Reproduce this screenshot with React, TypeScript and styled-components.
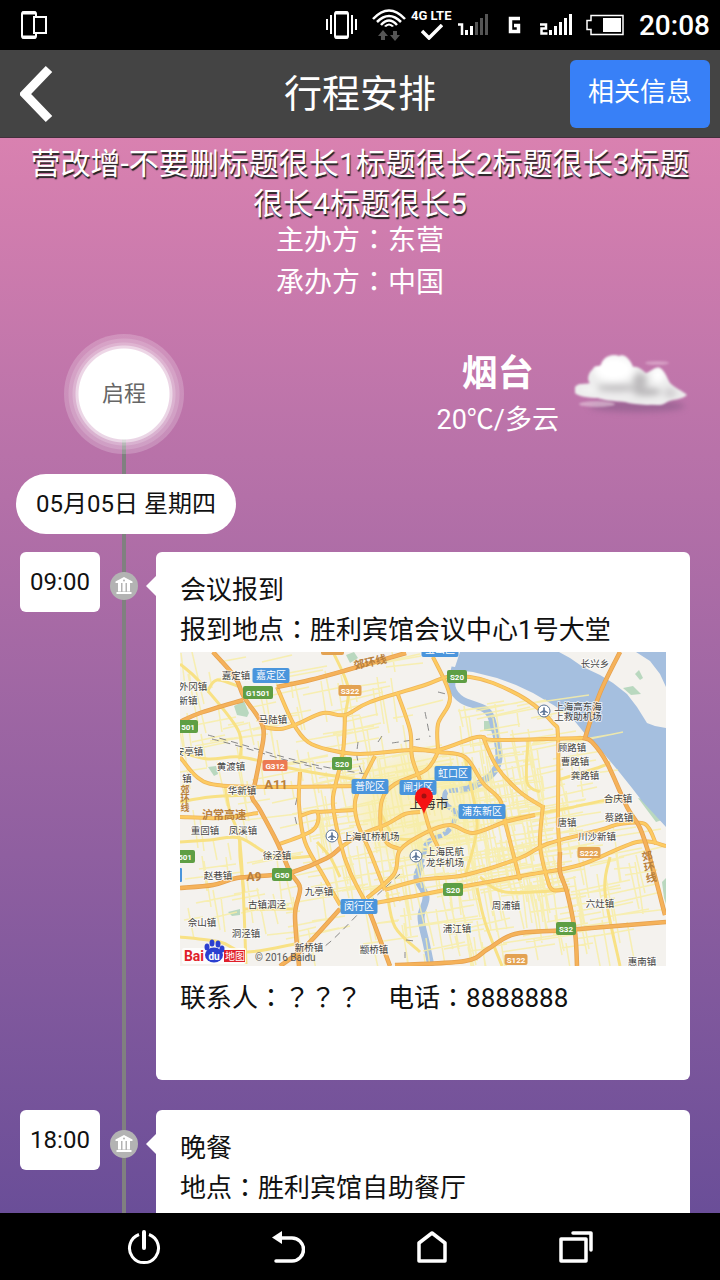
import React from 'react';
import styled, { createGlobalStyle } from 'styled-components';

const GlobalStyle = createGlobalStyle`
  *, *::before, *::after { box-sizing: border-box; }
  body {
    margin: 0;
    background: #000;
    font-family: Roboto, "Noto Sans CJK SC", sans-serif;
    color: #111;
  }
  button { font: inherit; border: 0; cursor: pointer; }
  h1, h2, h3, p { margin: 0; font-weight: 400; }
  svg { display: block; }
`;

const Shell = styled.div`
  height: 100vh;
  display: flex;
  flex-direction: column;
`;

/* ---------- status bar ---------- */

const StatusBar = styled.div`
  flex: none;
  height: 50px;
  padding: 0 10px 0 20px;
  display: flex;
  align-items: center;
  justify-content: space-between;
  background: #000;
  color: #fff;
`;

const StatusIcons = styled.div`
  display: flex;
  align-items: center;
  gap: 5px;
`;

const Clock = styled.time`
  padding-top: 2px;
  font-size: 28px;
  line-height: 48px;
  font-weight: 500;
`;

const NetworkLabel = styled.div`
  width: 42px;
  height: 34px;
  font-size: 13px;
  line-height: 16px;
  font-weight: 700;
  white-space: nowrap;
`;

const CheckMark = styled.svg`
  margin: 0 auto;
`;

/* ---------- header ---------- */

const Header = styled.header`
  flex: none;
  height: 88px;
  padding: 0 10px;
  display: grid;
  grid-template-columns: 1fr auto 1fr;
  align-items: center;
  background: #444;
  border-bottom: 1px solid #43303c;
  color: #fff;
`;

const BackButton = styled.button`
  justify-self: start;
  padding: 8px 10px;
  background: none;
`;

const HeaderTitle = styled.h1`
  font-size: 38px;
  line-height: 50px;
`;

const InfoButton = styled.button`
  justify-self: end;
  width: 140px;
  height: 68px;
  padding: 0 0 4px;
  border-radius: 6px;
  background: #3880f7;
  color: #fff;
  font-size: 26px;
  line-height: 40px;
`;

/* ---------- page ---------- */

const Page = styled.main`
  flex: 1;
  min-height: 0;
  overflow-y: auto;
  scrollbar-width: none;
  background: linear-gradient(#d981b0, #6a4e98);
`;

const Intro = styled.section`
  padding: 6px 24px 0;
  text-align: center;
  color: #fff;
`;

const MeetingTitle = styled.h2`
  font-size: 30px;
  line-height: 40px;
  text-shadow: 1px 2px 1px #222;
`;

const Organizers = styled.div`
  margin-top: -4px;
  font-size: 28px;
  line-height: 42px;
`;

const FullWidth = styled.span`
  font-family: "Noto Sans CJK TC", sans-serif;
  line-height: 1;
`;

const Journey = styled.section`
  position: relative;
  padding: 30px 30px 30px 20px;
`;

const Rail = styled.div`
  position: absolute;
  left: 122px;
  top: 90px;
  bottom: 0;
  width: 4px;
  background: #808080;
`;

const StartRow = styled.div`
  position: relative;
  display: flex;
  justify-content: space-between;
  height: 120px;
  padding-left: 44px;
`;

const StartBadge = styled.div`
  position: relative;
  width: 120px;
  height: 120px;
  border-radius: 50%;
  display: flex;
  align-items: center;
  justify-content: center;
  background: radial-gradient(
    circle,
    #fff 45px,
    rgba(255, 255, 255, 0.7) 46px,
    rgba(255, 255, 255, 0.7) 48px,
    rgba(255, 255, 255, 0.45) 49px,
    rgba(255, 255, 255, 0.45) 51px,
    rgba(255, 255, 255, 0.32) 52px,
    rgba(255, 255, 255, 0.32) 55px,
    rgba(255, 255, 255, 0.2) 56px,
    rgba(255, 255, 255, 0.2) 60px
  );
  color: #666;
  font-size: 22px;
  line-height: 30px;
`;

const Weather = styled.div`
  display: flex;
  align-items: flex-start;
  gap: 10px;
  color: #fff;
  text-align: center;
`;

const WeatherText = styled.div`
  padding-top: 16px;
`;

const City = styled.h3`
  && { font-weight: 700; }
  font-size: 36px;
  line-height: 48px;
`;

const Condition = styled.p`
  font-size: 27px;
  line-height: 44px;
`;

const CloudIcon = styled.svg`
  margin-top: 14px;
`;

const DayPill = styled.div`
  position: relative;
  width: fit-content;
  margin: 20px 0 18px -4px;
  padding: 0 20px;
  border-radius: 30px;
  background: #fff;
  font-size: 24px;
  line-height: 60px;
`;

const Events = styled.ol`
  margin: 0;
  padding: 0;
  list-style: none;
  display: flex;
  flex-direction: column;
  gap: 30px;
`;

const Event = styled.li`
  position: relative;
  display: flex;
  align-items: flex-start;
`;

const EventTime = styled.time`
  width: 80px;
  border-radius: 6px;
  background: #fff;
  text-align: center;
  font-size: 24px;
  line-height: 60px;
`;

const EventMarker = styled.svg`
  margin: 20px 18px 0 10px;
  flex: none;
`;

const EventCard = styled.article`
  position: relative;
  flex: 1;
  min-width: 0;
  min-height: 528px;
  padding: 18px 24px;
  border-radius: 6px;
  background: #fff;
  font-size: 26px;
  line-height: 40px;
  &::before {
    content: "";
    position: absolute;
    left: -10px;
    top: 24px;
    border: 10px solid transparent;
    border-left-width: 0;
    border-right-color: #fff;
  }
`;

const EventTitle = styled.h3`
  font-size: 26px;
  line-height: 40px;
`;

const Contact = styled.p`
  display: flex;
  gap: 26px;
  padding-top: 12px;
`;

const MapView = styled.svg`
  width: 100%;
  height: auto;
  margin-top: 2px;
`;

/* ---------- navigation bar ---------- */

const NavBar = styled.nav`
  flex: none;
  height: 67px;
  padding: 0 10%;
  display: flex;
  background: #000;
`;

const NavButton = styled.button`
  flex: 1;
  padding: 0;
  display: flex;
  align-items: center;
  justify-content: center;
  background: none;
`;

/* Full-width punctuation sits centred in its cell. */
function Text({ children }: { children: string }) {
  return (
    <>
      {children.split(/([：？]+)/).map((part, i) =>
        i % 2 ? <FullWidth key={i}>{part}</FullWidth> : part,
      )}
    </>
  );
}

/* ---------- map data ---------- */

type Pt = [number, number];

function smooth(points: Pt[]): string {
  let d = `M${points[0][0]} ${points[0][1]}`;
  for (let i = 0; i < points.length - 1; i++) {
    const a = points[i - 1] || points[i];
    const b = points[i];
    const c = points[i + 1];
    const e = points[i + 2] || c;
    d += `C${b[0] + (c[0] - a[0]) / 6} ${b[1] + (c[1] - a[1]) / 6} ${c[0] - (e[0] - b[0]) / 6} ${c[1] - (e[1] - b[1]) / 6} ${c[0]} ${c[1]}`;
  }
  return d;
}

const highways: Pt[][] = [
  [[33, 0], [55, 25], [64, 45], [83, 75], [80, 105], [75, 131], [72, 145], [80, 158], [97, 190], [110, 220], [120, 236], [115, 263], [119, 314]],
  [[0, 70], [20, 61], [63, 48]],
  [[97, 35], [130, 28], [167, 18], [226, 1]],
  [[0, 236], [33, 233], [57, 226], [93, 223], [113, 220], [147, 206], [160, 196]],
  [[440, 0], [420, 41], [405, 86]],
  [[403, 86], [412, 90], [427, 111], [447, 155], [460, 176], [470, 206], [485, 263]],
  [[380, 200], [380, 220], [387, 240], [395, 280], [397, 314]],
  [[215, 313], [285, 309], [308, 297], [335, 282], [387, 278], [486, 270]],
  [[187, 253], [198, 282], [210, 314]],
  [[160, 257], [125, 295], [100, 314]],
];

const ringRoads: Pt[][] = [
  [[83, 75], [100, 77], [117, 72], [143, 61], [165, 63], [190, 50], [245, 33], [267, 25], [290, 25], [313, 31], [347, 48], [373, 71], [378, 85], [378, 158], [378, 173], [380, 205]],
  [[97, 35], [113, 71], [128, 90], [150, 98], [180, 102], [230, 98], [258, 98], [293, 86], [303, 85], [317, 88], [403, 86]],
  [[0, 105], [17, 125], [37, 133], [87, 135], [177, 134]],
  [[165, 63], [163, 100], [155, 135], [153, 153], [160, 190], [170, 220], [187, 253]],
  [[217, 40], [230, 78], [232, 105], [240, 128]],
  [[195, 104], [183, 128], [175, 150], [178, 172], [190, 200], [205, 238]],
  [[120, 120], [119, 153], [125, 190], [143, 223], [160, 253]],
  [[0, 165], [40, 166], [78, 161]],
  [[160, 196], [180, 183], [207, 172], [225, 162], [240, 160]],
  [[205, 238], [240, 228], [285, 223], [340, 206], [367, 192], [420, 178], [440, 172], [465, 172], [476, 192]],
  [[187, 246], [214, 222], [220, 198], [245, 181], [270, 173], [293, 181], [325, 170], [355, 163]],
  [[195, 251], [240, 243], [280, 235], [347, 223], [400, 213], [457, 190], [486, 194]],
  [[363, 153], [360, 193], [367, 226], [373, 238], [387, 237]],
  [[325, 170], [340, 228]],
  [[303, 85], [317, 115], [340, 140], [363, 155]],
  [[253, 5], [270, 45], [258, 72], [258, 98]],
  [[233, 96], [258, 100], [285, 105], [303, 131], [320, 148], [325, 170]],
  [[258, 100], [246, 118], [215, 132], [202, 148], [201, 178], [208, 192], [220, 197]],
  [[244, 158], [250, 178], [258, 195]],
  [[97, 193], [133, 178], [137, 160], [120, 164]],
  [[137, 160], [175, 158]],
];

const streets: Pt[][] = [
  [[0, 12], [20, 30], [58, 78], [60, 107]],
  [[27, 40], [37, 28], [60, 35]],
  [[0, 100], [28, 107], [60, 105], [100, 114], [130, 120], [180, 128]],
  [[45, 133], [50, 160], [59, 185], [63, 235], [66, 312]],
  [[0, 190], [30, 188], [60, 186], [95, 205], [133, 204]],
  [[153, 0], [168, 35], [165, 63]],
  [[0, 150], [30, 145], [70, 143]],
  [[63, 257], [115, 257]],
  [[0, 285], [40, 290], [66, 300], [115, 292]],
  [[297, 236], [305, 270], [322, 314]],
  [[348, 88], [347, 130], [360, 140]],
  [[378, 128], [420, 115], [430, 110]],
  [[300, 225], [325, 240], [390, 238]],
  [[325, 167], [378, 158], [440, 145]],
  [[285, 105], [290, 130], [297, 175], [285, 225]],
  [[200, 160], [215, 185], [235, 187]],
  [[137, 190], [150, 205], [160, 225]],
  [[207, 240], [215, 275], [240, 300]],
  [[430, 205], [425, 240], [440, 314]],
  [[60, 185], [60, 205], [64, 240]],
];

const lanes: string = (() => {
  let seed = 7;
  const rnd = () => {
    seed = (seed * 16807) % 2147483647;
    return seed / 2147483647;
  };
  let d = '';
  const field = (x0: number, y0: number, w: number, h: number, n: number) => {
    for (let i = 0; i < n; i++) {
      const x = x0 + rnd() * w;
      const y = y0 + rnd() * h;
      const len = 14 + rnd() * 46;
      const k = 0.12 + rnd() * 0.12;
      if (rnd() > 0.5) d += `M${x.toFixed(0)} ${y.toFixed(0)}l${len.toFixed(0)} ${(-len * k).toFixed(0)}`;
      else d += `M${x.toFixed(0)} ${y.toFixed(0)}l${(len * k).toFixed(0)} ${len.toFixed(0)}`;
    }
  };
  field(0, 0, 230, 130, 110);
  field(0, 150, 150, 140, 60);
  field(130, 100, 210, 140, 220);
  field(270, 50, 90, 190, 130);
  field(340, 90, 60, 160, 70);
  field(180, 220, 230, 90, 90);
  field(390, 165, 70, 120, 30);
  return d;
})();

const rails: Pt[][] = [
  [[28, 83], [60, 92], [100, 104], [140, 114], [185, 122]],
  [[32, 87], [62, 95], [102, 107], [142, 117]],
  [[117, 146], [115, 155]],
  [[115, 165], [117, 174]],
  [[220, 222], [190, 250], [150, 290], [125, 306]],
  [[178, 90], [177, 105], [182, 121]],
  [[198, 90], [202, 84]],
  [[212, 91], [240, 87]],
  [[245, 60], [250, 85]],
  [[258, 40], [266, 42]],
  [[226, 288], [235, 289]],
  [[225, 300], [225, 306]],
];

const towns: [string, number, number][] = [
  ['嘉定镇', 56, 23], ['外冈镇', 13, 34], ['新镇', 8, 48], ['马陆镇', 93, 67],
  ['安亭镇', 9, 99], ['黄渡镇', 51, 114], ['镇', 7, 126], ['华新镇', 62, 138], ['重固镇', 25, 178],
  ['凤溪镇', 63, 178], ['徐泾镇', 97, 203], ['赵巷镇', 38, 223], ['九亭镇', 139, 239],
  ['古镇泗泾', 87, 252], ['佘山镇', 22, 270], ['洞泾镇', 66, 281], ['新桥镇', 129, 295],
  ['颛桥镇', 194, 297], ['上海虹桥机场', 191, 184], ['上海民航', 265, 199],
  ['龙华机场', 265, 210], ['上海高东海', 398, 54], ['上救助机场', 398, 64],
  ['长兴乡', 415, 11], ['顾路镇', 392, 95], ['曹路镇', 395, 109], ['龚路镇', 405, 123],
  ['合庆镇', 438, 146], ['蔡路镇', 439, 165], ['唐镇', 387, 170], ['川沙新镇', 417, 184],
  ['周浦镇', 326, 253], ['六灶镇', 420, 251], ['浦江镇', 277, 276], ['惠南镇', 462, 309],
];

const districts: [string, number, number, number][] = [
  ['嘉定区', 91, 24, 37], ['宝山区', 260, -2, 37], ['普陀区', 190, 135, 37],
  ['闸北区', 238, 136, 37], ['虹口区', 273, 122, 37], ['浦东新区', 302, 160, 47],
  ['闵行区', 179, 255, 37],
];

const GREEN = '#5e9e44';
const ORANGE = '#e3a252';
const RED = '#ec7a52';

const shields: [string, number, number, number, string][] = [
  ['G1501', 78, 40, 30, GREEN], ['G1501', 3, 74, 30, GREEN], ['S20', 277, 24, 20, GREEN],
  ['S20', 162, 111, 20, GREEN], ['G50', 102, 222, 20, GREEN], ['G1501', 0, 204, 30, GREEN],
  ['S20', 273, 237, 20, GREEN], ['S32', 386, 276, 20, GREEN], ['S322', 170, 39, 23, ORANGE],
  ['S222', 409, 201, 23, ORANGE], ['S122', 336, 308, 23, ORANGE], ['G312', 95, 114, 25, RED],
];

const planes: Pt[] = [[152, 184], [236, 204], [364, 59]];

const plane = 'M0 -5L1 -4V-1L5 1.500V2.500L1 1.500V3.500L2.500 5H-2.500L-1 3.500V1.500L-5 2.500V1.500L-1 -1V-4Z';

function VenueMap() {
  return (
    <MapView viewBox="0 0 486 314" role="img" aria-label="地图">
      <defs>
        <clipPath id="map-clip"><rect width="486" height="314" /></clipPath>
        <filter id="glow" x="-20%" y="-20%" width="140%" height="140%"><feGaussianBlur stdDeviation="8" /></filter>
      </defs>
      <g clipPath="url(#map-clip)" fontFamily='Roboto, "Noto Sans CJK SC", sans-serif' fontSize="10" textAnchor="middle">
        <rect width="486" height="314" fill="#f4f2ee" />
        <ellipse cx="238" cy="155" rx="62" ry="52" fill="#faf0b4" opacity=".7" filter="url(#glow)" />
        <g fill="#b9d8bf">
          <path d="M54 54l10-5 5 12-2 4-10-2z" />
          <path d="M28 115l8-1 2 8-4 2z" />
          <path d="M166 3l8-3 4 6-8 5z" />
          <path d="M288 14l12-4 10 5-10 5z" />
          <path d="M304 69h8v10h-8z" />
          <path d="M48 260l12-3v6l-8 1z" />
          <path d="M443 36l10-2 8 8-10 1z" />
          <path d="M455 22l4-4 4 8-3 2z" />
          <path d="M458 146l10 2 14 20-6 2z" />
          <path d="M482 230l4-4v26l-2-6z" />
        </g>
        <path
          fill="#a5bfdf"
          d="M280 0L274 18L293 20L317 26L336 33L353 41L375 54L393 67L410 88L425 103L440 121L452 136L462 149L475 163L486 175V76L475 74L467 71L457 55L447 42L433 31L420 23L403 15L390 6L379 0Z"
        />
        <path fill="#a5bfdf" d="M456 0L470 9L480 22L486 35V0Z" />
        <g fill="none" stroke="#a5bfdf" strokeWidth="5">
          <path strokeWidth="7" d={smooth([[275, 15], [272, 35], [282, 48], [306, 58], [314, 75], [319, 105], [312, 122], [292, 135], [280, 138]])} />
          <path strokeDasharray="9 2" d={smooth([[278, 138], [266, 140], [266, 152], [276, 162], [267, 180], [248, 190], [243, 205], [237, 221]])} />
          <path strokeWidth="7" d={smooth([[242, 212], [237, 226], [246, 245], [241, 265], [246, 290], [251, 314]])} />
        </g>
        <path d={lanes} fill="none" stroke="#f7eda6" strokeWidth="1.500" opacity=".85" />
        <g fill="none" stroke="#f8e184" strokeWidth="3">
          {streets.map((r, i) => <path key={i} d={smooth(r)} />)}
        </g>
        <g fill="none" stroke="#888" strokeWidth="1" strokeDasharray="7 5">
          {rails.map((r, i) => <path key={i} d={smooth(r)} />)}
        </g>
        <g fill="none" stroke="#eeb45a" strokeWidth="4">
          {ringRoads.map((r, i) => <path key={i} d={smooth(r)} />)}
        </g>
        <g fill="none" stroke="#fdcb62" strokeWidth="2.500">
          {ringRoads.map((r, i) => <path key={i} d={smooth(r)} />)}
        </g>
        <g fill="none" stroke="#e5a04e" strokeWidth="4.500">
          {highways.map((r, i) => <path key={i} d={smooth(r)} />)}
        </g>
        <g fill="none" stroke="#f5b25a" strokeWidth="3">
          {highways.map((r, i) => <path key={i} d={smooth(r)} />)}
        </g>

        <g fill="#b9803c" fontSize="13" fontWeight="700">
          <text transform="translate(191 14) rotate(-12)" fontSize="11">郊环线</text>
          <text x="96" y="137">A11</text>
          <text x="44" y="167" fontSize="11">沪常高速</text>
          <text x="74" y="229" fontSize="12">A9</text>
          <text transform="translate(468 208) rotate(-10)" fontSize="11">
            <tspan x="0" y="0">郊</tspan>
            <tspan x="0" y="11">环</tspan>
            <tspan x="0" y="22">线</tspan>
          </text>
          <text fontSize="9">
            <tspan x="5" y="141">郊</tspan>
            <tspan x="5" y="150">环</tspan>
            <tspan x="5" y="159">线</tspan>
          </text>
        </g>

        <g fill="#444" stroke="#fff" strokeWidth="2" strokeOpacity=".7" paintOrder="stroke" strokeLinejoin="round" fontSize="9.500">
          {towns.map(([name, x, y]) => (
            <text key={name + x} x={x} y={y + 4}>{name}</text>
          ))}
        </g>

        {planes.map(([x, y]) => (
          <g key={x} transform={`translate(${x} ${y})`}>
            <circle r="6" fill="#fff" stroke="#5b7497" />
            <path d={plane} fill="#5b7497" transform="scale(.8)" />
          </g>
        ))}

        {districts.map(([name, x, y, w]) => (
          <g key={name}>
            <rect x={x - w / 2} y={y - 8} width={w} height="15" rx="2" fill="#4a95dc" />
            <text x={x} y={y + 3} fill="#fff">{name}</text>
          </g>
        ))}

        <rect x="141" y="-8" width="23" height="11" rx="2" fill={ORANGE} />
        <rect x="-4" y="216" width="6" height="14" rx="1" fill="#4a95dc" />

        <g fontSize="8" fontWeight="700">
          {shields.map(([name, x, y, w, color]) => (
            <g key={name + x}>
              <rect x={x - w / 2} y={y - 6} width={w} height={color === GREEN ? 13 : 11} rx="2" fill={color} />
              <text x={x} y={color === GREEN ? y + 4 : y + 3} fill="#fff">{name}</text>
            </g>
          ))}
        </g>

        <text x="249" y="156" fill="#333" fontSize="13">上海市</text>
        <path d="M244 162C242 154 235 150 235 144.500A9 9 0 0 1 253 144.500C253 150 246 154 244 162Z" fill="#f51313" />
        <circle cx="244" cy="144" r="2.500" fill="#a01010" />

        <rect x="2" y="296" width="64" height="16" rx="2" fill="#fff" opacity=".8" />
        <text x="14" y="309" fill="#e0202a" fontSize="14" fontWeight="700">Bai</text>
        <g fill="#2b3fd0">
          <ellipse cx="34" cy="303" rx="9" ry="7.500" />
          <ellipse cx="27" cy="295" rx="2.500" ry="3.500" />
          <ellipse cx="32" cy="291" rx="2.500" ry="3.500" />
          <ellipse cx="38" cy="292" rx="2.500" ry="3.500" />
          <ellipse cx="42" cy="297" rx="2.500" ry="3.500" />
        </g>
        <text x="34" y="308" fill="#fff" fontSize="10" fontWeight="700">du</text>
        <rect x="44" y="298" width="21" height="12" fill="#e0202a" />
        <text x="55" y="308" fill="#fff" fontSize="10">地图</text>
        <text x="75" y="309" fill="#555" fontSize="10" textAnchor="start">© 2016 Baidu</text>
      </g>
    </MapView>
  );
}

function Marker() {
  return (
    <EventMarker width="28" height="28" viewBox="0 0 28 28" aria-hidden="true">
      <circle cx="14" cy="14" r="14" fill="#b3b3b3" />
      <path
        fill="#fff"
        d="M14 5L22.500 9.500V11H5.500V9.500ZM8 11H11V19.500H8ZM12.500 11H15.500V19.500H12.500ZM17 11H20V19.500H17ZM6.500 20H21.500V22H6.500Z"
      />
      <circle cx="14" cy="8.500" r="1" fill="#b3b3b3" />
    </EventMarker>
  );
}

function Cloud() {
  return (
    <CloudIcon width="121" height="72" viewBox="0 0 121 72" role="img" aria-label="多云">
      <defs>
        <filter id="soft" x="-20%" y="-40%" width="140%" height="180%"><feGaussianBlur stdDeviation="0.800" /></filter>
        <filter id="softer" x="-40%" y="-80%" width="180%" height="260%"><feGaussianBlur stdDeviation="3" /></filter>
        <clipPath id="cloud-shape">
          <path d="M6 39C10 34 17 37 21 35C17 31 20 24 24 21C25 17 30 19 32 17C34 8 44 5 50 8C56 5 62 13 64 19C69 18 73 22 77 25C82 24 86 18 91 20C96 23 98 30 101 35C106 40 114 43 118 47C113 52 104 51 98 54C92 59 84 56 79 57C70 56 62 56 56 54C44 53 34 52 29 50C20 50 8 48 6 45Z" />
        </clipPath>
      </defs>
      <ellipse cx="68" cy="58" rx="48" ry="6" fill="#7b5580" opacity=".5" filter="url(#softer)" />
      <ellipse cx="28" cy="56" rx="18" ry="3" fill="#f0dbe8" opacity=".5" filter="url(#soft)" />
      <ellipse cx="88" cy="15" rx="12" ry="2" fill="#e9c3dc" opacity=".5" filter="url(#soft)" />
      <g filter="url(#soft)">
        <g clipPath="url(#cloud-shape)">
          <rect width="121" height="72" fill="#ececec" />
          <g filter="url(#softer)">
            <ellipse cx="45" cy="21" rx="20" ry="13" fill="#fff" />
            <ellipse cx="89" cy="27" rx="7" ry="8" fill="#fff" />
            <ellipse cx="48" cy="40" rx="22" ry="4" fill="#c4c2c4" />
            <ellipse cx="71" cy="33" rx="7" ry="8" fill="#bdbbbd" />
            <ellipse cx="78" cy="44" rx="14" ry="4" fill="#b9b7b9" />
            <ellipse cx="101" cy="45" rx="6" ry="5" fill="#d0ced0" />
            <ellipse cx="20" cy="42" rx="10" ry="4" fill="#f4f4f4" />
            <ellipse cx="45" cy="48" rx="18" ry="2" fill="#f2f0f2" />
            <ellipse cx="86" cy="54" rx="14" ry="3" fill="#f0f0f0" />
          </g>
        </g>
      </g>
    </CloudIcon>
  );
}

function Signal({ label, on, width }: { label: string; on: number; width: number }) {
  return (
    <svg width={width} height="22" viewBox={`0 0 ${width} 22`} role="img" aria-label="信号">
      {label === '1' ? (
        <path d="M0 10.500H4V21" fill="none" stroke="#fff" strokeWidth="2.500" />
      ) : (
        <path d="M0 10.500H6V14.500H1.500V19.500H7.500" fill="none" stroke="#fff" strokeWidth="2.500" />
      )}
      {[0, 1, 2, 3, 4].map((i) => (
        <rect key={i} x={(label === '1' ? 7 : 9) + i * 5} y={16 - i * 4} width="3" height={5 + i * 4} fill={i < on ? '#fff' : '#555'} />
      ))}
    </svg>
  );
}

export default function App() {
  return (
    <Shell>
      <GlobalStyle />
      <StatusBar>
        <svg width="28" height="30" viewBox="0 0 28 30" aria-hidden="true">
          <rect x="2" y="2" width="14" height="26" rx="2" fill="none" stroke="#fff" strokeWidth="2" />
          <path d="M2 3H16M2 27H16" stroke="#fff" strokeWidth="3" />
          <rect x="14" y="7" width="12" height="16" fill="#000" stroke="#fff" strokeWidth="2" />
        </svg>
        <StatusIcons>
          <svg width="41" height="30" viewBox="0 0 41 30" aria-hidden="true">
            <rect x="9" y="2" width="13" height="26" rx="2" fill="none" stroke="#fff" strokeWidth="2" />
            <path d="M9 3H22M9 27H22" stroke="#fff" strokeWidth="3" />
            <path d="M1 9V20M5 5V24M26 5V24M30 9V20" stroke="#fff" strokeWidth="2" />
          </svg>
          <svg width="34" height="34" viewBox="0 0 34 34" aria-hidden="true">
            <path d="M1 11Q17 -6 33 11M5 14Q17 2 29 14M9 17Q17 8 25 17" fill="none" stroke="#fff" strokeWidth="2.500" />
            <path d="M12 18Q17 13 22 18L20 19Q17 16 14 19Z" fill="#fff" />
            <path d="M11 22L16 28H13V32H9V28H6ZM23 33L18 27H21V23H25V27H28Z" fill="#555" />
          </svg>
          <NetworkLabel>
            4G LTE
            <CheckMark width="22" height="16" viewBox="0 0 22 16" aria-hidden="true">
              <path d="M1 7L8 14L21 1" fill="none" stroke="#fff" strokeWidth="3.500" />
            </CheckMark>
          </NetworkLabel>
          <Signal label="1" on={2} width={45} />
          <svg width="27" height="18" viewBox="0 0 27 18" role="img" aria-label="G">
            <path d="M12 2.500H2.500V15.500H10.500V9.500H6" fill="none" stroke="#fff" strokeWidth="3.500" />
          </svg>
          <Signal label="2" on={5} width={41} />
          <svg width="48" height="22" viewBox="0 0 48 22" role="img" aria-label="电池">
            <path d="M5 1.500H37V20.500H5V15.500H1V6.500H5Z" fill="none" stroke="#fff" strokeWidth="1.500" />
            <rect x="17" y="4" width="18" height="14" fill="#fff" />
          </svg>
          <Clock>20:08</Clock>
        </StatusIcons>
      </StatusBar>

      <Header>
        <BackButton aria-label="返回">
          <svg width="34" height="58" viewBox="0 0 34 58" aria-hidden="true">
            <path d="M29 4L5 29L29 54" fill="none" stroke="#fff" strokeWidth="9" />
          </svg>
        </BackButton>
        <HeaderTitle>行程安排</HeaderTitle>
        <InfoButton>相关信息</InfoButton>
      </Header>

      <Page>
        <Intro>
          <MeetingTitle>营改增-不要删标题很长1标题很长2标题很长3标题很长4标题很长5</MeetingTitle>
          <Organizers>
            <p><Text>主办方：东营</Text></p>
            <p><Text>承办方：中国</Text></p>
          </Organizers>
        </Intro>

        <Journey>
          <Rail />
          <StartRow>
            <StartBadge>启程</StartBadge>
            <Weather>
              <WeatherText>
                <City>烟台</City>
                <Condition>20℃/多云</Condition>
              </WeatherText>
              <Cloud />
            </Weather>
          </StartRow>
          <DayPill>05月05日 星期四</DayPill>
          <Events>
            <Event>
              <EventTime>09:00</EventTime>
              <Marker />
              <EventCard>
                <EventTitle>会议报到</EventTitle>
                <p><Text>报到地点：胜利宾馆会议中心1号大堂</Text></p>
                <VenueMap />
                <Contact>
                  <span><Text>联系人：？？？</Text></span>
                  <span><Text>电话：8888888</Text></span>
                </Contact>
              </EventCard>
            </Event>
            <Event>
              <EventTime>18:00</EventTime>
              <Marker />
              <EventCard>
                <EventTitle>晚餐</EventTitle>
                <p><Text>地点：胜利宾馆自助餐厅</Text></p>
              </EventCard>
            </Event>
          </Events>
        </Journey>
      </Page>

      <NavBar>
        <NavButton aria-label="电源">
          <svg width="34" height="36" viewBox="0 0 34 36" aria-hidden="true">
            <path d="M12 5.500A14.500 14.500 0 1 0 22 5.500" fill="none" stroke="#fff" strokeWidth="3" />
            <path d="M17 3V19" stroke="#fff" strokeWidth="4" strokeLinecap="round" />
          </svg>
        </NavButton>
        <NavButton aria-label="返回">
          <svg width="34" height="36" viewBox="0 0 34 36" aria-hidden="true">
            <path d="M8 9H21A11.500 11.500 0 0 1 21 32H5" fill="none" stroke="#fff" strokeWidth="3.500" strokeLinecap="round" />
            <path d="M1 8.500L11 2V15Z" fill="#fff" />
          </svg>
        </NavButton>
        <NavButton aria-label="主页">
          <svg width="34" height="36" viewBox="0 0 34 36" aria-hidden="true">
            <path d="M4 32V14L17 4L30 14V32Z" fill="none" stroke="#fff" strokeWidth="3.500" strokeLinejoin="round" />
          </svg>
        </NavButton>
        <NavButton aria-label="最近任务">
          <svg width="34" height="36" viewBox="0 0 34 36" aria-hidden="true">
            <rect x="2" y="10" width="25" height="22" fill="none" stroke="#fff" strokeWidth="3.500" strokeLinejoin="round" />
            <path d="M14 4H32V21" fill="none" stroke="#fff" strokeWidth="3.500" strokeLinecap="round" strokeLinejoin="round" />
          </svg>
        </NavButton>
      </NavBar>
    </Shell>
  );
}
